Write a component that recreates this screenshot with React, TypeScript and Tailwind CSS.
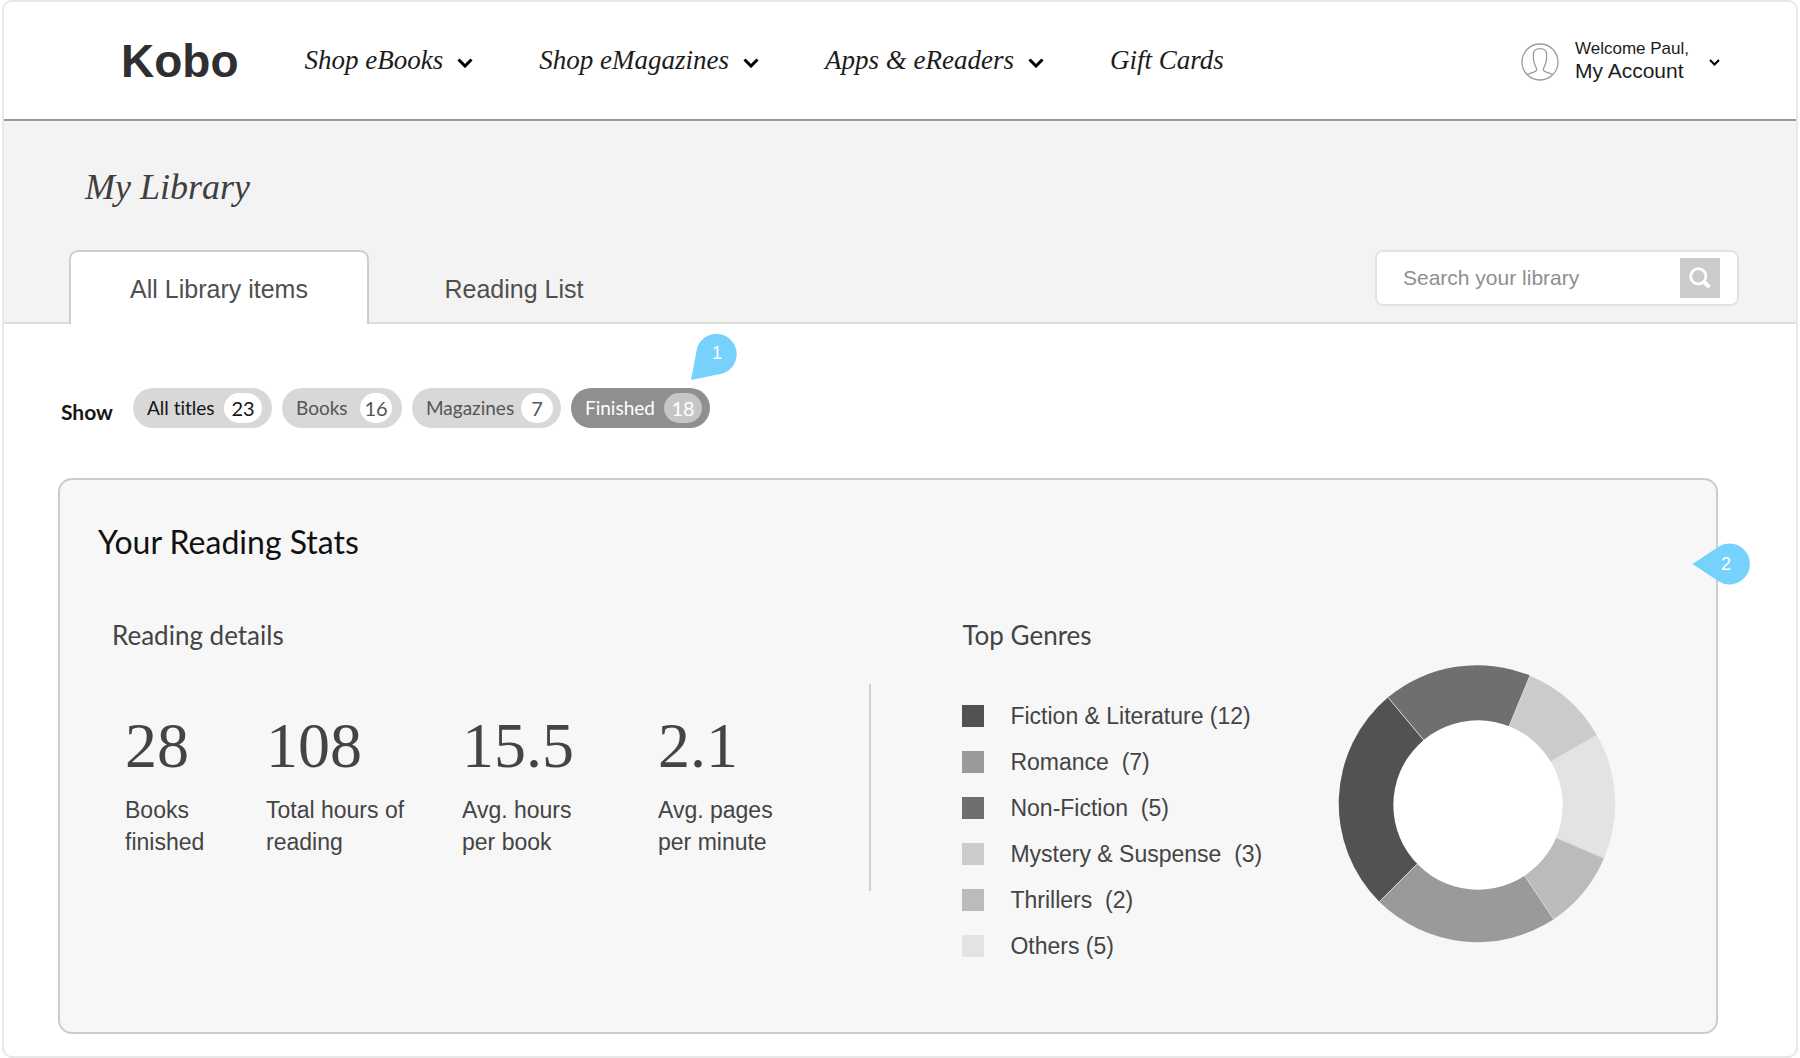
import React from "react";

const SERIF = "font-['Liberation_Serif',serif]";
const LATO = "font-['Lato',sans-serif] [font-variant-ligatures:none]";

function Chevron({ className }: { className: string }) {
  return (
    <svg viewBox="0 0 16 10" className={className} fill="none" aria-hidden="true">
      <path d="M1.5 1.5 L8 8 L14.5 1.5" stroke="currentColor" strokeWidth="3" />
    </svg>
  );
}

const NAV = [
  { label: "Shop eBooks", menu: true },
  { label: "Shop eMagazines", menu: true },
  { label: "Apps & eReaders", menu: true },
  { label: "Gift Cards", menu: false },
];

function Header() {
  return (
    <header className="flex h-[119px] items-center border-b-2 border-[#999] bg-white pr-[76px] pl-[117px]">
      <a href="#home" className="text-[46px] leading-[52px] font-bold text-[#2f2f31]">
        Kobo
      </a>
      <nav className={`ml-[66px] flex items-center gap-[66px] pb-0.5 ${SERIF}`}>
        {NAV.map((item) =>
          item.menu ? (
            <button key={item.label} type="button" className="flex items-center gap-3.5 text-[27px] leading-8 whitespace-nowrap text-[#1c1c1c] italic">
              {item.label}
              <Chevron className="mt-1.5 h-2.5 w-4 text-black" />
            </button>
          ) : (
            <a key={item.label} href="#gift-cards" className="text-[27px] leading-8 whitespace-nowrap text-[#1c1c1c] italic">
              {item.label}
            </a>
          ),
        )}
      </nav>
      <button type="button" className="ml-auto flex items-center pt-0.5 text-left text-[#1c1c1c]">
        <svg viewBox="0 0 38 38" className="h-[38px] w-[38px]" fill="none" stroke="#9a9a9a" strokeWidth="1.3" aria-hidden="true">
          <circle cx="19" cy="19" r="18" />
          <path d="M6.5 31.6 C9 29.6 15.6 29.8 15.6 26.6 C15.6 23.6 12.4 21.5 12.4 15 V11.6 C12.4 7.6 14.8 5.6 19 5.6 C23.2 5.6 25.6 7.6 25.6 11.6 V15 C25.6 21.5 22.4 23.6 22.4 26.6 C22.4 29.8 29 29.6 31.5 31.6" />
        </svg>
        <span className="ml-4 flex flex-col pb-0.5 whitespace-nowrap">
          <span className="text-[17px] leading-5">Welcome Paul,</span>
          <span className="text-[21px] leading-6">My Account</span>
        </span>
        <Chevron className="ml-5 mt-0.5 h-[7px] w-[11px] text-black" />
      </button>
    </header>
  );
}

function LibraryBar() {
  return (
    <section className="border-b-2 border-[#ddd] bg-[#f3f3f3] pt-[46px] pr-[57px] pl-[65px]">
      <h1 className={`pl-4 text-[36px] leading-10 text-[#3f3f3f] italic ${SERIF}`}>My Library</h1>
      <div className="mt-[43px] -mb-0.5 flex items-start">
        <div role="tablist" className="flex text-[25px] leading-7 text-[#4f4f4f]">
          <button
            role="tab"
            aria-selected="true"
            type="button"
            className="h-[74px] w-[300px] rounded-t-[9px] border-2 border-b-0 border-[#cfcfcf] bg-white pt-0.5 whitespace-nowrap"
          >
            All Library items
          </button>
          <button role="tab" aria-selected="false" type="button" className="h-[74px] w-[290px] pt-1 whitespace-nowrap">
            Reading List
          </button>
        </div>
        <form className="ml-auto flex h-14 w-[364px] items-center rounded-lg border-2 border-[#e2e2e2] bg-white pr-[17px] pl-[26px]">
          <input
            type="search"
            aria-label="Search your library"
            placeholder="Search your library"
            className="min-w-0 flex-1 text-[21px] leading-6 outline-none placeholder:text-[#8f8f8f] placeholder:opacity-100"
          />
          <button type="button" aria-label="Search" className="flex h-10 w-10 items-center justify-center bg-[#cbcbcb]">
            <svg viewBox="0 0 22 22" className="h-[22px] w-[22px]" fill="none" stroke="#fff" aria-hidden="true">
              <circle cx="9.3" cy="9.3" r="7.6" strokeWidth="2.8" />
              <path d="M14.8 14.8 L20.4 20.2" strokeWidth="4" />
            </svg>
          </button>
        </form>
      </div>
    </section>
  );
}

const FILTERS = [
  { label: "All titles", count: 23, pill: "w-[139px] pr-2.5 bg-[#d8d8d8] text-[#151515]", badge: "w-[38px] bg-white" },
  { label: "Books", count: 16, pill: "w-[120px] pr-2.5 bg-[#d8d8d8] text-[#555]", badge: "w-8 bg-white" },
  { label: "Magazines", count: 7, pill: "w-[149px] pr-2 bg-[#d8d8d8] text-[#555]", badge: "w-8 bg-white" },
  { label: "Finished", count: 18, pill: "w-[139px] pr-2 bg-[#8f8f8f] text-white", badge: "w-[38px] bg-[#c6c6c6]", note: true },
];

function Filters() {
  return (
    <div className={`flex items-center pl-[57px] ${LATO}`}>
      <span className="w-[72px] pt-2 text-[21px] leading-6 font-bold text-[#151515]">Show</span>
      <div className="flex gap-2.5">
        {FILTERS.map((f) => (
          <div key={f.label} className="relative">
            <button
              type="button"
              className={`flex h-10 items-center justify-between rounded-full pl-3.5 text-[19px] leading-6 whitespace-nowrap ${f.pill}`}
            >
              {f.label}
              <span className={`flex h-[30px] items-center justify-center rounded-full text-[20px] ${f.badge}`}>{f.count}</span>
            </button>
            {f.note && (
              <div className="absolute -top-[55px] left-[119px] h-12 w-12">
                <svg viewBox="0 0 48 48" className="absolute inset-0 h-12 w-12" aria-hidden="true">
                  <path d="M1 47 L7.2 14.5 A20.3 20.3 0 1 1 31.5 40.8 Z" fill="#76d2fd" />
                </svg>
                <span className="absolute top-2.5 left-[22px] text-[18px] leading-5 font-['Liberation_Sans',sans-serif] text-white">1</span>
              </div>
            )}
          </div>
        ))}
      </div>
    </div>
  );
}

const STATS = [
  { value: "28", lines: ["Books", "finished"] },
  { value: "108", lines: ["Total hours of", "reading"] },
  { value: "15.5", lines: ["Avg. hours", "per book"] },
  { value: "2.1", lines: ["Avg. pages", "per minute"] },
];

const GENRES = [
  { label: "Fiction & Literature (12)", color: "bg-[#525252]" },
  { label: "Romance  (7)", color: "bg-[#9a9a9a]" },
  { label: "Non-Fiction  (5)", color: "bg-[#6f6f6f]" },
  { label: "Mystery & Suspense  (3)", color: "bg-[#cbcbcb]" },
  { label: "Thrillers  (2)", color: "bg-[#bbbbbb]" },
  { label: "Others (5)", color: "bg-[#e3e3e3]" },
];

// Rim points where one slice ends and the next begins, clockwise from the top.
const SLICES = [
  { from: [232, 171], to: [658, 106], fill: "#6f6f6f" },
  { from: [658, 106], to: [858, 283], fill: "#cbcbcb" },
  { from: [858, 283], to: [880, 654], fill: "#e3e3e3" },
  { from: [880, 654], to: [729, 837], fill: "#bbbbbb" },
  { from: [729, 837], to: [206, 784], fill: "#9a9a9a" },
  { from: [206, 784], to: [232, 171], fill: "#525252" },
];

function Donut() {
  return (
    <svg viewBox="82 74 834 834" className="h-[278px] w-[278px] shrink-0" role="img" aria-label="Top genres chart">
      {SLICES.map((s) => (
        <path key={s.fill} fill={s.fill} d={`M${s.from[0]} ${s.from[1]} A417 417 0 0 1 ${s.to[0]} ${s.to[1]} L499 491 Z`} />
      ))}
      {SLICES.map((s) => (
        <line key={s.fill} x1={s.from[0]} y1={s.from[1]} x2="499" y2="491" stroke="#d6d6d6" strokeWidth="3" />
      ))}
      <circle cx="502" cy="494" r="254" fill="#fff" />
    </svg>
  );
}

function StatsCard() {
  return (
    <section className="relative mt-[50px] mr-[78px] ml-[54px] rounded-[14px] border-2 border-[#cccccc] bg-[#f7f7f7] pt-[42px] pb-[63px]">
      <h2 className={`pl-[38px] text-[32px] leading-10 text-[#111] ${LATO}`}>Your Reading Stats</h2>
      <div className="mt-[57px] grid grid-cols-[49fr_51fr]">
        <div>
          <h3 className={`pl-[52px] text-[26px] leading-8 text-[#444] ${LATO}`}>Reading details</h3>
          <div className="mt-[33px] grid min-h-[207px] grid-cols-[141px_196px_196px_1fr] border-r-2 border-[#d0d0d0] pt-[30px] pl-[65px] text-[#444]">
            {STATS.map((s) => (
              <div key={s.value}>
                <div className={`text-[64px] leading-[64px] ${SERIF}`}>{s.value}</div>
                <div className="mt-4 text-[23px] leading-8 whitespace-nowrap">
                  {s.lines[0]}
                  <br />
                  {s.lines[1]}
                </div>
              </div>
            ))}
          </div>
        </div>
        <div className="flex justify-between pr-[100px] pl-[91px]">
          <div>
            <h3 className={`text-[26px] leading-8 text-[#444] ${LATO}`}>Top Genres</h3>
            <ul className="mt-[42px]">
              {GENRES.map((g) => (
                <li key={g.label} className="flex items-center gap-[26px] text-[23px] leading-[46px] whitespace-pre text-[#444]">
                  <span className={`h-[22px] w-[22px] ${g.color}`} />
                  {g.label}
                </li>
              ))}
            </ul>
          </div>
          <div className="pt-[46px]">
            <Donut />
          </div>
        </div>
      </div>
      <div className="absolute top-[63px] -right-[34px] h-[42px] w-[58px]">
        <svg viewBox="0 0 58 42" className="absolute inset-0 h-[42px] w-[58px]" aria-hidden="true">
          <path d="M0.5 21 L26.5 3.8 A20.4 20.4 0 1 1 26.5 38.2 Z" fill="#76d2fd" />
        </svg>
        <span className="absolute top-[11px] left-[29px] text-[18px] leading-5 text-white">2</span>
      </div>
    </section>
  );
}

export default function App() {
  return (
    <div className="min-h-screen bg-white px-0.5 pb-px font-['Liberation_Sans',sans-serif]">
      <div className="overflow-hidden rounded-[10px] border-2 border-[#e7e7e7] bg-white">
        <Header />
        <main className="pb-[22px]">
          <LibraryBar />
          <div className="pt-16">
            <Filters />
          </div>
          <StatsCard />
        </main>
      </div>
    </div>
  );
}
